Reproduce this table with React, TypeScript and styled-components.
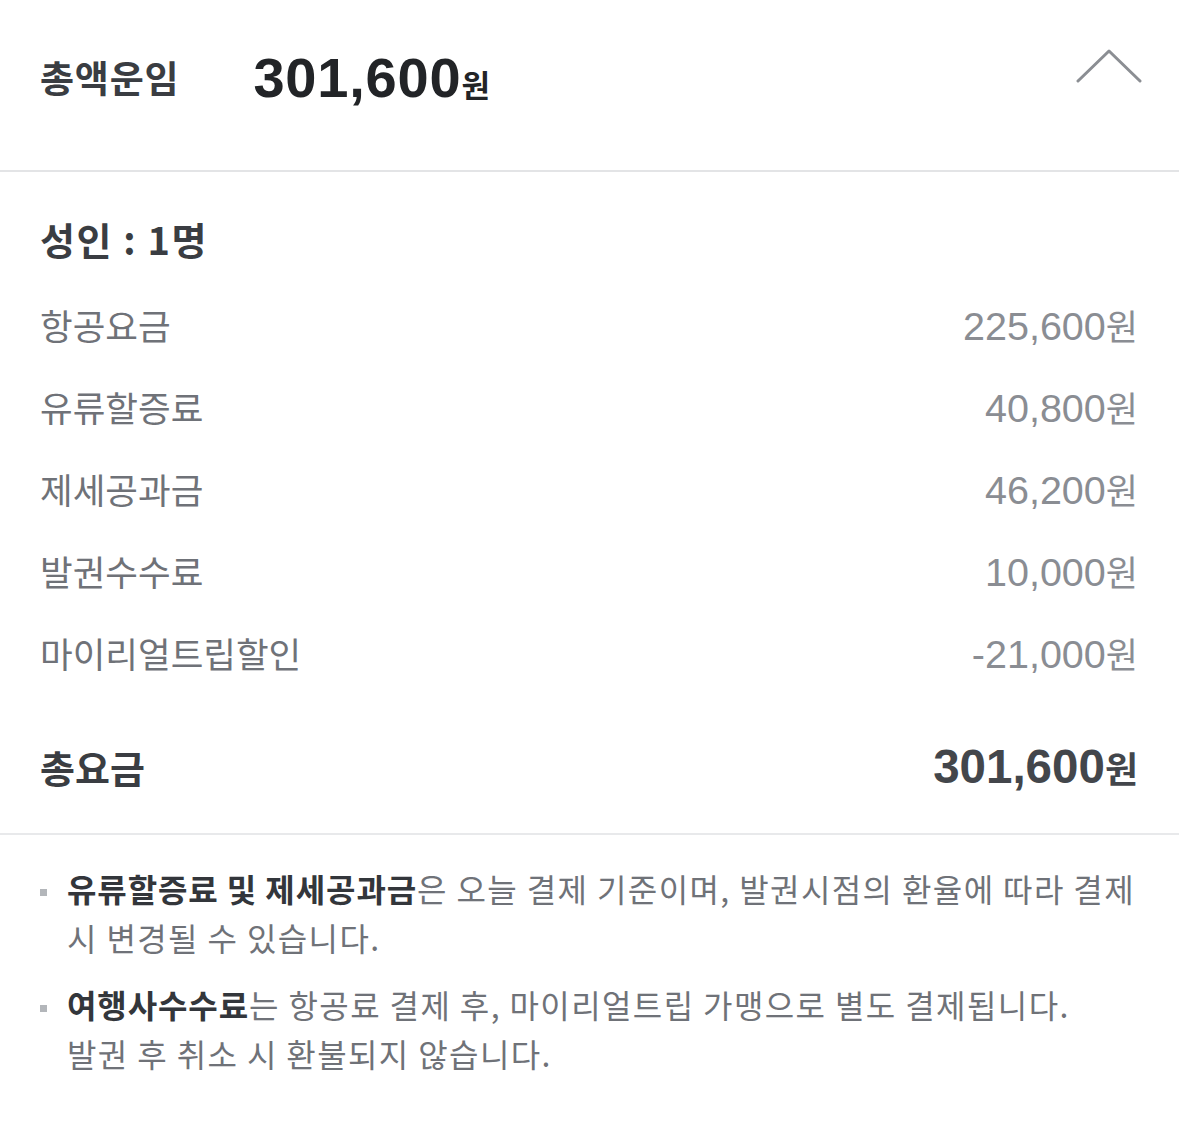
import React from "react";
import styled, { createGlobalStyle } from "styled-components";

const Global = createGlobalStyle`
  html, body { margin: 0; padding: 0; background: #ffffff; }
  body { font-family: "Noto Sans CJK KR", "Noto Sans", sans-serif; }
`;

const FONT = `"Liberation Sans", "Noto Sans CJK KR", sans-serif`;
const KR = `"Noto Sans CJK KR", sans-serif`;

const Page = styled.div`
  width: 1179px;
  min-height: 1123px;
  background: #fff;
  font-family: ${FONT};
`;

const Header = styled.header`
  box-sizing: border-box;
  height: 172px;
  padding: 48px 37px 0 40px;
  display: flex;
  align-items: flex-start;
  border-bottom: 2px solid #e3e4e6;
`;

const TitleGroup = styled.div`
  display: flex;
  align-items: baseline;
  gap: 74px;
  margin-top: -4px;
`;

const HeaderTitle = styled.h1`
  margin: 0;
  font-size: 37px;
  font-weight: 700;
  color: #3a3d42;
  line-height: 1.2;
  letter-spacing: 0.8px;
  font-family: ${KR};
  position: relative;
  top: -4px;
`;

const BigAmount = styled.div`
  font-size: 56px;
  font-weight: 700;
  color: #222427;
  line-height: 1.2;
  letter-spacing: 0.8px;
`;

const Unit = styled.span<{ $size: number }>`
  font-family: ${KR};
  font-size: ${(p) => p.$size}px;
  font-weight: inherit;
  letter-spacing: 0;
`;

const Chevron = styled.svg`
  margin-left: auto;
  width: 66px;
  height: 36px;
`;

const Breakdown = styled.section`
  padding: 44px 41px 0 40px;
  border-bottom: 2px solid #e8e9eb;
`;

const GroupTitle = styled.h2`
  margin: 0 0 22px;
  font-size: 38px;
  font-weight: 700;
  color: #3a3d42;
  line-height: 1.2;
  letter-spacing: 1.6px;
  font-family: ${KR};
`;

const Row = styled.div<{ $total?: boolean }>`
  display: flex;
  justify-content: space-between;
  align-items: center;
  height: ${(p) => (p.$total ? 132 : 82)}px;
  margin-top: ${(p) => (p.$total ? 7 : 0)}px;
`;

const Label = styled.span<{ $total?: boolean }>`
  font-family: ${KR};
  font-size: ${(p) => (p.$total ? 38 : 35.5)}px;
  font-weight: ${(p) => (p.$total ? 700 : 400)};
  color: ${(p) => (p.$total ? "#3a3d42" : "#6f7278")};
`;

const Value = styled.span<{ $total?: boolean }>`
  font-family: ${FONT};
  font-size: ${(p) => (p.$total ? 47.5 : 39.5)}px;
  font-weight: ${(p) => (p.$total ? 700 : 400)};
  color: ${(p) => (p.$total ? "#43464b" : "#8a8d93")};
`;

const Notes = styled.ul`
  list-style: none;
  margin: 0;
  padding: 29px 36px 0 40px;
  display: flex;
  flex-direction: column;
  gap: 18px;
`;

const Note = styled.li`
  display: flex;
  gap: 20px;
  font-family: ${KR};
  font-size: 32px;
  letter-spacing: 1.4px;
  line-height: 49px;
  color: #6f7278;
  word-break: keep-all;
`;

const Bullet = styled.span`
  flex: none;
  width: 7px;
  height: 7px;
  margin-top: 25px;
  background: #b3b6ba;
`;

const Strong = styled.b`
  font-weight: 700;
  color: #33363b;
  letter-spacing: 0.9px;
`;

const items = [
  { label: "항공요금", value: "225,600" },
  { label: "유류할증료", value: "40,800" },
  { label: "제세공과금", value: "46,200" },
  { label: "발권수수료", value: "10,000" },
  { label: "마이리얼트립할인", value: "-21,000" },
];

export default function App() {
  return (
    <Page>
      <Global />
      <Header>
        <TitleGroup>
          <HeaderTitle>총액운임</HeaderTitle>
          <BigAmount>
            301,600<Unit $size={31}>원</Unit>
          </BigAmount>
        </TitleGroup>
        <Chevron viewBox="0 0 66 36" fill="none">
          <polyline
            points="2,33 33,3 64,33"
            stroke="#8b8e93"
            strokeWidth="3"
            strokeLinecap="round"
            strokeLinejoin="round"
          />
        </Chevron>
      </Header>
      <Breakdown>
        <GroupTitle>성인 : 1명</GroupTitle>
        {items.map((it) => (
          <Row key={it.label}>
            <Label>{it.label}</Label>
            <Value>
              {it.value}
              <Unit $size={35}>원</Unit>
            </Value>
          </Row>
        ))}
        <Row $total>
          <Label $total>총요금</Label>
          <Value $total>
            301,600<Unit $size={36}>원</Unit>
          </Value>
        </Row>
      </Breakdown>
      <Notes>
        <Note>
          <Bullet />
          <span>
            <Strong>유류할증료 및 제세공과금</Strong>은 오늘 결제 기준이며, 발권시점의 환율에 따라 결제 시 변경될 수 있습니다.
          </span>
        </Note>
        <Note>
          <Bullet />
          <span>
            <Strong>여행사수수료</Strong>는 항공료 결제 후, 마이리얼트립 가맹으로 별도 결제됩니다.
            <br />
            발권 후 취소 시 환불되지 않습니다.
          </span>
        </Note>
      </Notes>
    </Page>
  );
}
